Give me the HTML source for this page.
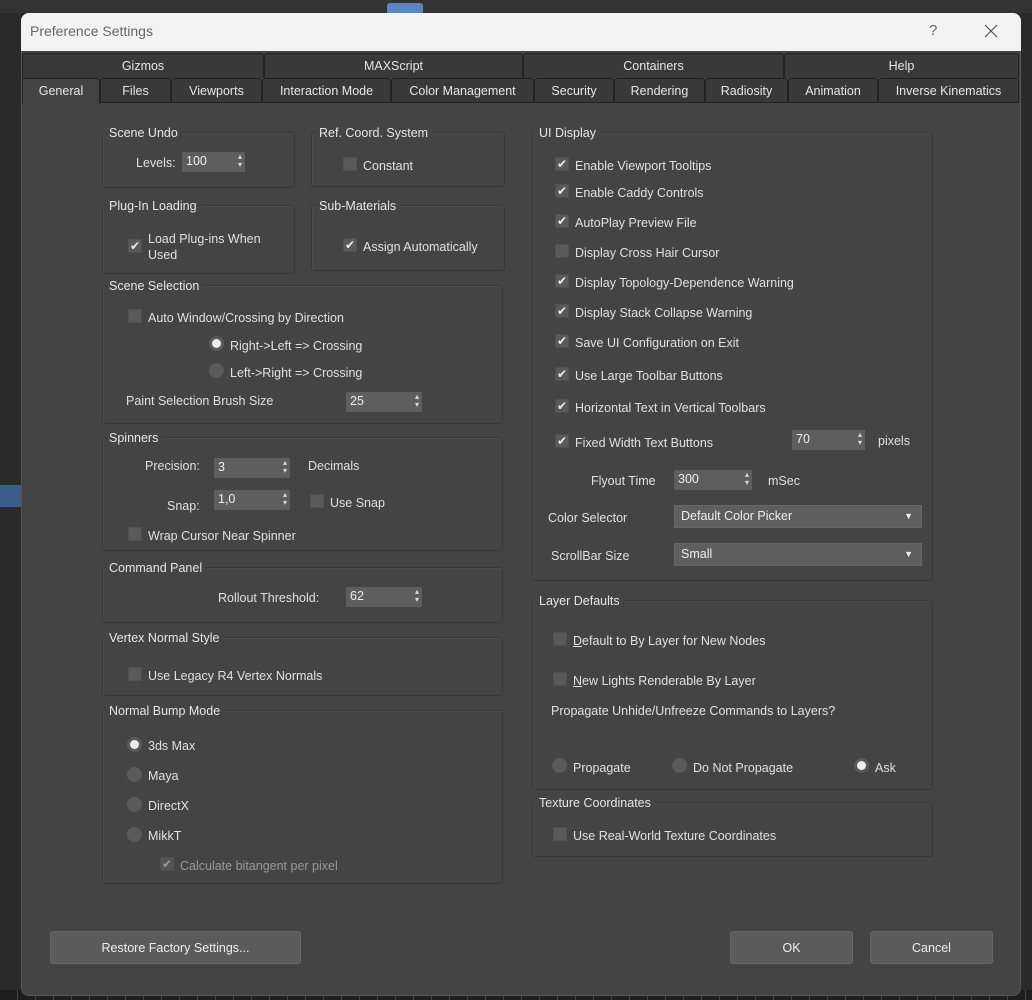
<!DOCTYPE html>
<html><head><meta charset="utf-8"><style>
*{box-sizing:border-box;margin:0;padding:0}
body{width:1032px;height:1000px;background:#2a2a2a;position:relative;overflow:hidden;font-family:"Liberation Sans",sans-serif;font-size:12.5px;color:#e0e0e0}
.a{position:absolute}
.dlg{left:21px;top:13px;width:1000px;height:983px;background:#444;border-radius:8px;border:1px solid #555}
.title{left:21px;top:13px;width:1000px;height:38px;background:#f3f3f3;border-radius:8px 8px 0 0;color:#666;font-size:14px}
.tab{position:absolute;height:25px;background:#393939;border:1px solid #222;border-bottom:none;border-radius:3px 3px 0 0;text-align:center;line-height:24px;color:#e6e6e6}
.g{position:absolute;border:1px solid #383838;box-shadow:inset 1px 1px 0 #4c4c4c;border-radius:3px}
.lg{position:absolute;background:#444;padding:0 4px;line-height:16px;color:#e6e6e6;margin-top:1px}
.t{position:absolute;line-height:16px;white-space:nowrap;margin-top:1px}
.cb{position:absolute;width:14px;height:14px;background:#5a5a5a;border:1px solid #505050;color:#eee;font-size:12px;line-height:12px;text-align:center}
.rb{position:absolute;width:15px;height:15px;border-radius:50%;background:#5a5a5a}
.rb.on::after{content:"";position:absolute;left:3px;top:3px;width:9px;height:9px;border-radius:50%;background:#eee}
.sp{position:absolute;height:20px;background:#5e5e5e;color:#eee;padding-left:4px;line-height:18px}
.sp::after{content:"▴\A▾";white-space:pre;position:absolute;right:3px;top:1px;font-size:8px;line-height:8px;color:#ddd}
.dd{position:absolute;height:23px;background:#5e5e5e;border:1px solid #666;padding-left:6px;line-height:21px;color:#eee}
.dd::after{content:"▼";position:absolute;right:8px;top:0;font-size:9px}
.btn{position:absolute;height:33px;background:#5b5b5b;border:1px solid #666;border-radius:3px;text-align:center;line-height:32px;color:#eee}
</style></head><body>
<div class="a" style="left:0;top:0;width:1032px;height:13px;background:#333"></div>
<div class="a" style="left:387px;top:3px;width:36px;height:12px;background:#5b86c4;border-radius:3px"></div>
<div class="a" style="left:0;top:485px;width:21px;height:22px;background:#3d5d8a"></div>
<div class="a" style="left:0;top:990px;width:1032px;height:10px;background:repeating-linear-gradient(90deg,#1e1e1e 0 17px,#444 17px 18px)"></div>
<div class="a dlg"></div>
<div class="a title"><span class="a" style="left:9px;top:10px">Preference Settings</span><span class="a" style="left:908px;top:9px;font-size:15px">?</span>
<svg class="a" style="left:963px;top:11px" width="14" height="14" viewBox="0 0 14 14"><path d="M1 1L13 13M13 1L1 13" stroke="#555" stroke-width="1.2"/></svg></div>

<div class="tab" style="left:22px;top:53px;width:242px">Gizmos</div>
<div class="tab" style="left:264px;top:53px;width:259px">MAXScript</div>
<div class="tab" style="left:523px;top:53px;width:261px">Containers</div>
<div class="tab" style="left:784px;top:53px;width:235px">Help</div>
<div class="tab" style="left:22px;top:78px;width:78px;background:#444;height:26px">General</div>
<div class="tab" style="left:100px;top:78px;width:71px">Files</div>
<div class="tab" style="left:171px;top:78px;width:91px">Viewports</div>
<div class="tab" style="left:262px;top:78px;width:129px">Interaction Mode</div>
<div class="tab" style="left:391px;top:78px;width:143px">Color Management</div>
<div class="tab" style="left:534px;top:78px;width:80px">Security</div>
<div class="tab" style="left:614px;top:78px;width:91px">Rendering</div>
<div class="tab" style="left:705px;top:78px;width:83px">Radiosity</div>
<div class="tab" style="left:788px;top:78px;width:90px">Animation</div>
<div class="tab" style="left:878px;top:78px;width:141px">Inverse Kinematics</div>
<div class="a" style="left:100px;top:102px;width:919px;height:1px;background:#222"></div>

<div class="g" style="left:102px;top:132px;width:193px;height:56px"></div><div class="lg" style="left:105px;top:124px">Scene Undo</div>
<div class="t" style="left:136px;top:154px">Levels:</div><div class="sp" style="left:182px;top:152px;width:63px">100</div>
<div class="g" style="left:311px;top:132px;width:194px;height:55px"></div><div class="lg" style="left:315px;top:124px">Ref. Coord. System</div>
<div class="cb" style="left:343px;top:157px"></div><div class="t" style="left:363px;top:157px">Constant</div>

<div class="g" style="left:102px;top:205px;width:193px;height:69px"></div><div class="lg" style="left:105px;top:197px">Plug-In Loading</div>
<div class="cb" style="left:128px;top:239px">✔</div><div class="t" style="left:148px;top:230px">Load Plug-ins When<br>Used</div>
<div class="g" style="left:311px;top:205px;width:194px;height:66px"></div><div class="lg" style="left:315px;top:197px">Sub-Materials</div>
<div class="cb" style="left:343px;top:238px">✔</div><div class="t" style="left:363px;top:238px">Assign Automatically</div>

<div class="g" style="left:102px;top:285px;width:401px;height:139px"></div><div class="lg" style="left:105px;top:277px">Scene Selection</div>
<div class="cb" style="left:128px;top:309px"></div><div class="t" style="left:148px;top:309px">Auto Window/Crossing by Direction</div>
<div class="rb on" style="left:209px;top:336px"></div><div class="t" style="left:230px;top:337px">Right-&gt;Left =&gt; Crossing</div>
<div class="rb" style="left:209px;top:363px"></div><div class="t" style="left:230px;top:364px">Left-&gt;Right =&gt; Crossing</div>
<div class="t" style="left:126px;top:392px">Paint Selection Brush Size</div><div class="sp" style="left:346px;top:392px;width:76px">25</div>

<div class="g" style="left:102px;top:437px;width:401px;height:114px"></div><div class="lg" style="left:105px;top:429px">Spinners</div>
<div class="t" style="left:145px;top:457px">Precision:</div><div class="sp" style="left:214px;top:458px;width:76px">3</div><div class="t" style="left:308px;top:457px">Decimals</div>
<div class="t" style="left:167px;top:497px">Snap:</div><div class="sp" style="left:214px;top:490px;width:76px">1,0</div>
<div class="cb" style="left:310px;top:494px"></div><div class="t" style="left:330px;top:494px">Use Snap</div>
<div class="cb" style="left:128px;top:527px"></div><div class="t" style="left:148px;top:527px">Wrap Cursor Near Spinner</div>

<div class="g" style="left:102px;top:567px;width:401px;height:56px"></div><div class="lg" style="left:105px;top:559px">Command Panel</div>
<div class="t" style="left:218px;top:589px">Rollout Threshold:</div><div class="sp" style="left:346px;top:587px;width:76px">62</div>

<div class="g" style="left:102px;top:637px;width:401px;height:59px"></div><div class="lg" style="left:105px;top:629px">Vertex Normal Style</div>
<div class="cb" style="left:128px;top:667px"></div><div class="t" style="left:148px;top:667px">Use Legacy R4 Vertex Normals</div>

<div class="g" style="left:102px;top:710px;width:401px;height:174px"></div><div class="lg" style="left:105px;top:702px">Normal Bump Mode</div>
<div class="rb on" style="left:127px;top:737px"></div><div class="t" style="left:148px;top:737px">3ds Max</div>
<div class="rb" style="left:127px;top:767px"></div><div class="t" style="left:148px;top:767px">Maya</div>
<div class="rb" style="left:127px;top:797px"></div><div class="t" style="left:148px;top:797px">DirectX</div>
<div class="rb" style="left:127px;top:827px"></div><div class="t" style="left:148px;top:827px">MikkT</div>
<div class="cb" style="left:160px;top:857px;color:#999;background:#555">✔</div><div class="t" style="left:180px;top:857px;color:#999">Calculate bitangent per pixel</div>

<div class="g" style="left:532px;top:132px;width:401px;height:449px"></div><div class="lg" style="left:535px;top:124px">UI Display</div>
<div class="cb" style="left:555px;top:157px">✔</div><div class="t" style="left:575px;top:157px">Enable Viewport Tooltips</div>
<div class="cb" style="left:555px;top:184px">✔</div><div class="t" style="left:575px;top:184px">Enable Caddy Controls</div>
<div class="cb" style="left:555px;top:214px">✔</div><div class="t" style="left:575px;top:214px">AutoPlay Preview File</div>
<div class="cb" style="left:555px;top:244px"></div><div class="t" style="left:575px;top:244px">Display Cross Hair Cursor</div>
<div class="cb" style="left:555px;top:274px">✔</div><div class="t" style="left:575px;top:274px">Display Topology-Dependence Warning</div>
<div class="cb" style="left:555px;top:304px">✔</div><div class="t" style="left:575px;top:304px">Display Stack Collapse Warning</div>
<div class="cb" style="left:555px;top:334px">✔</div><div class="t" style="left:575px;top:334px">Save UI Configuration on Exit</div>
<div class="cb" style="left:555px;top:367px">✔</div><div class="t" style="left:575px;top:367px">Use Large Toolbar Buttons</div>
<div class="cb" style="left:555px;top:399px">✔</div><div class="t" style="left:575px;top:399px">Horizontal Text in Vertical Toolbars</div>
<div class="cb" style="left:555px;top:434px">✔</div><div class="t" style="left:575px;top:434px">Fixed Width Text Buttons</div>
<div class="sp" style="left:792px;top:430px;width:73px">70</div><div class="t" style="left:878px;top:432px">pixels</div>
<div class="t" style="left:591px;top:472px">Flyout Time</div><div class="sp" style="left:674px;top:470px;width:78px">300</div><div class="t" style="left:768px;top:472px">mSec</div>
<div class="t" style="left:548px;top:509px">Color Selector</div><div class="dd" style="left:674px;top:505px;width:248px">Default Color Picker</div>
<div class="t" style="left:551px;top:547px">ScrollBar Size</div><div class="dd" style="left:674px;top:543px;width:248px">Small</div>

<div class="g" style="left:532px;top:600px;width:401px;height:190px"></div><div class="lg" style="left:535px;top:592px">Layer Defaults</div>
<div class="cb" style="left:553px;top:632px"></div><div class="t" style="left:573px;top:632px"><u>D</u>efault to By Layer for New Nodes</div>
<div class="cb" style="left:553px;top:672px"></div><div class="t" style="left:573px;top:672px"><u>N</u>ew Lights Renderable By Layer</div>
<div class="t" style="left:551px;top:702px">Propagate Unhide/Unfreeze Commands to Layers?</div>
<div class="rb" style="left:552px;top:758px"></div><div class="t" style="left:573px;top:759px">Propagate</div>
<div class="rb" style="left:672px;top:758px"></div><div class="t" style="left:693px;top:759px">Do Not Propagate</div>
<div class="rb on" style="left:854px;top:758px"></div><div class="t" style="left:875px;top:759px">Ask</div>

<div class="g" style="left:532px;top:802px;width:401px;height:55px"></div><div class="lg" style="left:535px;top:794px">Texture Coordinates</div>
<div class="cb" style="left:553px;top:827px"></div><div class="t" style="left:573px;top:827px">Use Real-World Texture Coordinates</div>

<div class="btn" style="left:50px;top:931px;width:251px">Restore Factory Settings...</div>
<div class="btn" style="left:730px;top:931px;width:123px">OK</div>
<div class="btn" style="left:870px;top:931px;width:123px">Cancel</div>
</body></html>
